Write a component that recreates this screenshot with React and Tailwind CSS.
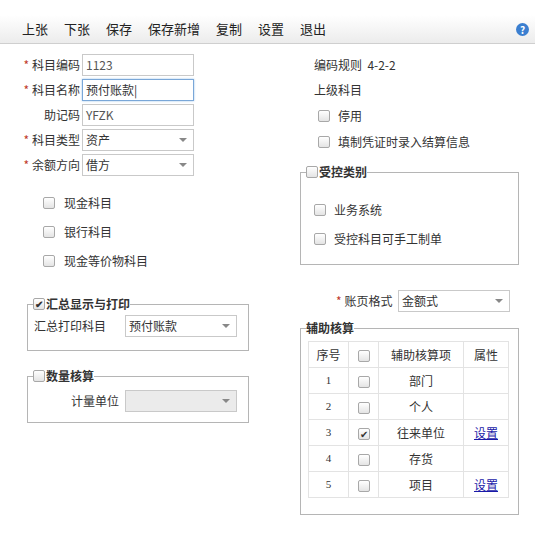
import React from "react";

const F = { fontFamily: '"Noto Sans CJK SC", "Liberation Sans", sans-serif' };

function Star() {
  return <span className="text-[#c0392b] mr-[3px]">*</span>;
}
function Box({ checked }) {
  return (
    <span className="inline-flex w-[12px] h-[12px] border border-[#a8a8a8] rounded-[2px] bg-gradient-to-b from-white to-[#e4e4e4] items-center justify-center text-[10px] leading-none text-[#333] align-middle">
      {checked ? "✔" : ""}
    </span>
  );
}
function Row({ star, label, children, lw = "w-[82px]" }) {
  return (
    <div className="flex items-center h-[25px]">
      <div className={`${lw} text-right pr-[2px] whitespace-nowrap`}>
        {star && <Star />}
        {label}
      </div>
      {children}
    </div>
  );
}
function Input({ value, focus, w = "w-[112px]" }) {
  return (
    <div className={`${w} h-[22px] border ${focus ? "border-[#7aa7d8] shadow-[0_0_2px_#9cc3ea]" : "border-[#c9c9c9]"} px-[3px] flex items-center bg-white`}>
      {value}
    </div>
  );
}
function Select({ value, w = "w-[112px]", disabled }) {
  return (
    <div className={`${w} h-[22px] border border-[#c9c9c9] px-[3px] flex items-center justify-between ${disabled ? "bg-[#ebebeb]" : "bg-white"}`}>
      <span>{value}</span>
      <span className="w-0 h-0 border-l-[4px] border-r-[4px] border-t-[4px] border-l-transparent border-r-transparent border-t-[#888] mr-[3px]" />
    </div>
  );
}
function Field({ title, check, checked, className, children }) {
  return (
    <fieldset className={`border border-[#b5b5b5] ${className}`}>
      <legend className="ml-[5px] px-0 font-bold flex items-center gap-[1px] text-[#333]">
        {check && <Box checked={checked} />}
        <span>{title}</span>
      </legend>
      {children}
    </fieldset>
  );
}

export default function App() {
  const rows = [
    ["1", false, "部门", ""],
    ["2", false, "个人", ""],
    ["3", true, "往来单位", "设置"],
    ["4", false, "存货", ""],
    ["5", false, "项目", "设置"],
  ];
  return (
    <div style={F} className="w-[535px] h-[536px] bg-white text-[12px] text-[#333] relative">
      <div className="h-[15px]" />
      <div className="h-[29px] flex items-center bg-gradient-to-b from-white to-[#ececec] border-b border-[#cfcfcf] pl-[22px] text-[13px] text-[#222]">
        {["上张", "下张", "保存", "保存新增", "复制", "设置", "退出"].map((t) => (
          <span key={t} className="mr-[16px]">{t}</span>
        ))}
        <span className="ml-auto mr-[6px] w-[13px] h-[13px] rounded-full bg-[#3b7fd0] text-white text-[10px] font-bold flex items-center justify-center">?</span>
      </div>
      <div className="flex pt-[8px]">
        <div className="w-[300px]">
          <Row star label="科目编码"><Input value={<span className="text-[#555]">1123</span>} /></Row>
          <Row star label="科目名称"><Input focus value="预付账款|" /></Row>
          <Row label="助记码"><Input value={<span className="text-[#555]">YFZK</span>} /></Row>
          <Row star label="科目类型"><Select value="资产" /></Row>
          <Row star label="余额方向"><Select value="借方" /></Row>
          <div className="pl-[43px] pt-[11px]">
            <div className="h-[29px] flex items-center gap-[9px]"><Box /><span>现金科目</span></div>
            <div className="h-[29px] flex items-center gap-[9px]"><Box /><span>银行科目</span></div>
            <div className="h-[29px] flex items-center gap-[9px]"><Box /><span>现金等价物科目</span></div>
          </div>
          <Field title="汇总显示与打印" check checked className="ml-[27px] w-[222px] h-[56px] mt-[20px]">
            <div className="flex items-center pl-[6px] pt-[2px]">
              <span className="w-[91px] whitespace-nowrap">汇总打印科目</span>
              <Select value="预付账款" />
            </div>
          </Field>
          <Field title="数量核算" check className="ml-[27px] w-[222px] h-[56px] mt-[16px]">
            <div className="flex items-center pl-[43px] pt-[5px]">
              <span className="w-[54px]">计量单位</span>
              <Select disabled w="w-[112px]" value="" />
            </div>
          </Field>
        </div>
        <div className="flex-1">
          <div className="pl-[14px] h-[25px] flex items-center">编码规则&nbsp;&nbsp;4-2-2</div>
          <div className="pl-[14px] h-[25px] flex items-center">上级科目</div>
          <div className="pl-[18px] h-[27px] flex items-center gap-[8px]"><Box /><span>停用</span></div>
          <div className="pl-[18px] h-[25px] flex items-center gap-[8px]"><Box /><span>填制凭证时录入结算信息</span></div>
          <Field title="受控类别" check className="w-[219px] h-[102px] mt-[9px]">
            <div className="pl-[13px] pt-[10px]">
              <div className="h-[38px] flex items-center gap-[8px]"><Box /><span>业务系统</span></div>
              <div className="h-[20px] flex items-center gap-[8px]"><Box /><span>受控科目可手工制单</span></div>
            </div>
          </Field>
          <div className="flex items-center mt-[25px] pl-[36px]">
            <span className="w-[62px] whitespace-nowrap"><Star />账页格式</span>
            <Select value="金额式" />
          </div>
          <Field title="辅助核算" className="w-[219px] h-[196px] mt-[7px]">
            <table className="ml-[7px] mt-[4px] border-collapse text-center">
              <tbody>
                <tr className="h-[26px]">
                  <td className="w-[40px] border border-[#e3e3e3]">序号</td>
                  <td className="w-[30px] border border-[#e3e3e3]"><Box /></td>
                  <td className="w-[85px] border border-[#e3e3e3]">辅助核算项</td>
                  <td className="w-[45px] border border-[#e3e3e3]">属性</td>
                </tr>
                {rows.map(([n, c, t, a]) => (
                  <tr key={n} className="h-[26px]">
                    <td className="border border-[#e3e3e3] text-[11px]" style={{ fontFamily: '"Liberation Serif", serif' }}>{n}</td>
                    <td className="border border-[#e3e3e3]"><Box checked={c} /></td>
                    <td className="border border-[#e3e3e3]">{t}</td>
                    <td className="border border-[#e3e3e3] text-[#1a1aa8] underline">{a}</td>
                  </tr>
                ))}
              </tbody>
            </table>
          </Field>
        </div>
      </div>
    </div>
  );
}
